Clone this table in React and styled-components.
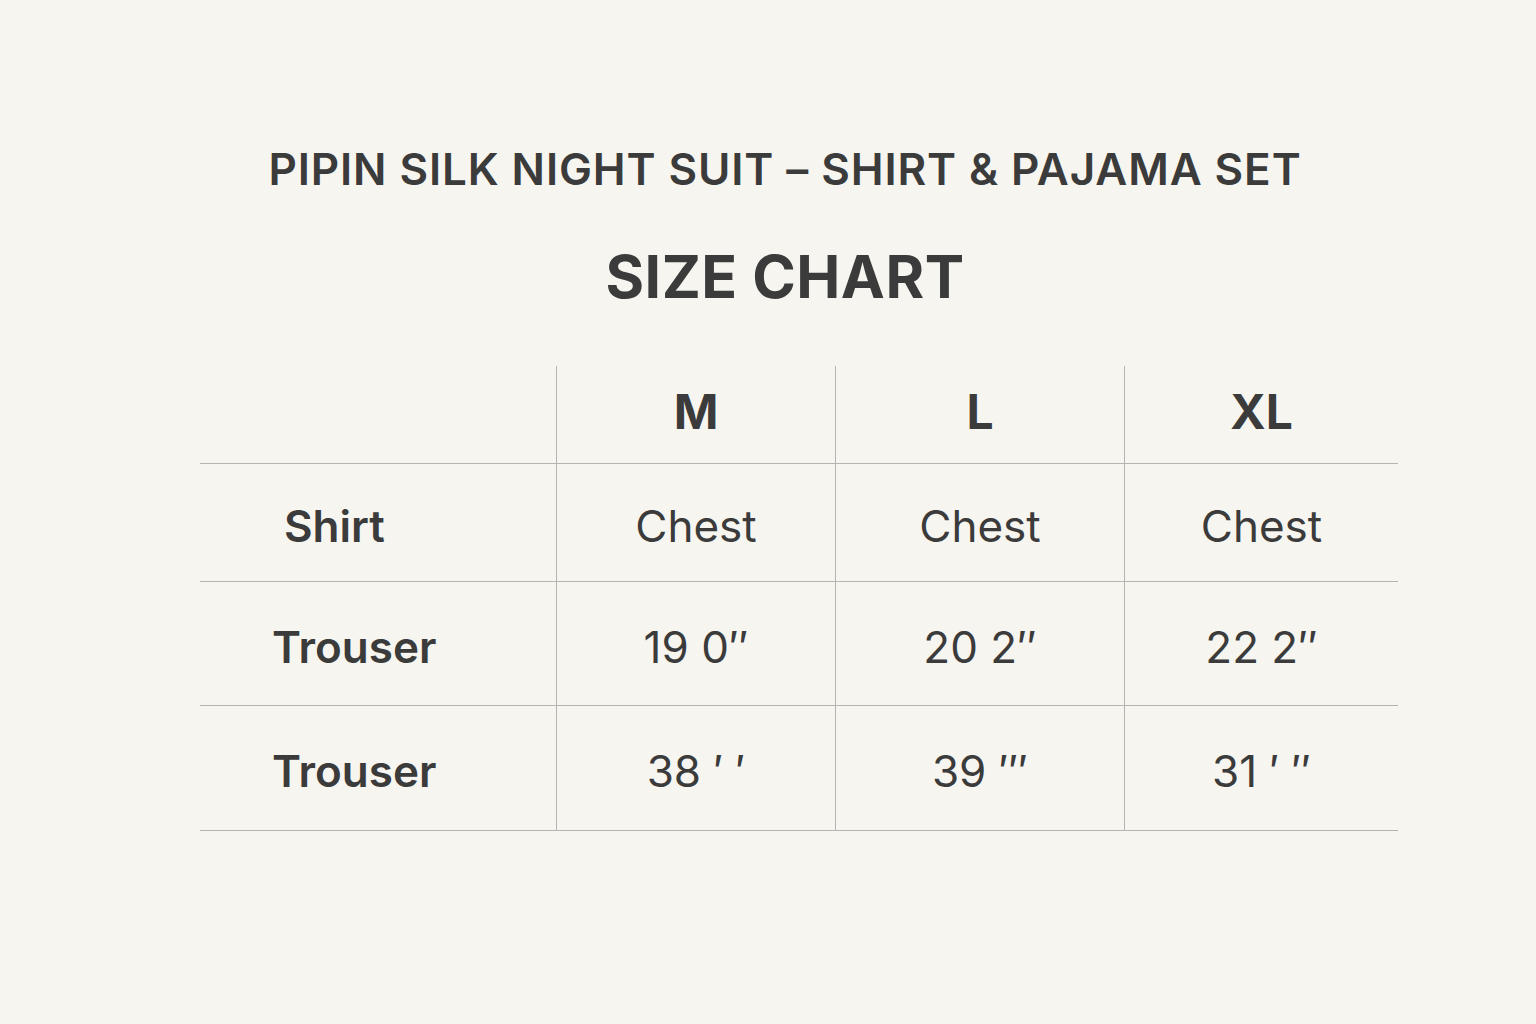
import React from "react";
import styled, { createGlobalStyle } from "styled-components";

const sizes = ["M", "L", "XL"];

const rows = [
  { label: "Shirt", indent: 84, values: ["Chest", "Chest", "Chest"], height: 118 },
  { label: "Trouser", indent: 72, values: ["19 0\u2033", "20 2\u2033", "22 2\u2033"], height: 124 },
  { label: "Trouser", indent: 72, values: ["38 \u2032 \u2032", "39 \u2032\u2033", "31 \u2032 \u2033"], height: 125 },
];

function App() {
  return (
    <>
      <GlobalStyle />
      <Page>
        <Heading>
          <Product>PIPIN SILK NIGHT SUIT – SHIRT &amp; PAJAMA SET</Product>
          <ChartTitle>SIZE CHART</ChartTitle>
        </Heading>

        <Table role="table" aria-label="size chart">
          <HeadCell $first />
          {sizes.map((s) => (
            <HeadCell key={s}>{s}</HeadCell>
          ))}

          {rows.map((row, i) => (
            <React.Fragment key={i}>
              <LabelCell $indent={row.indent} $height={row.height}>
                {row.label}
              </LabelCell>
              {row.values.map((v, j) => (
                <ValueCell key={j} $height={row.height}>
                  {v}
                </ValueCell>
              ))}
            </React.Fragment>
          ))}
        </Table>
      </Page>
    </>
  );
}

/* ----- styles ----- */

const GlobalStyle = createGlobalStyle`
  html, body {
    margin: 0;
    padding: 0;
    background: #f7f5f0;
  }
  body {
    font-family: Inter, "Liberation Sans", sans-serif;
    color: #3b3b3b;
  }
`;

const Page = styled.main`
  width: 1536px;
  height: 1024px;
  box-sizing: border-box;
  padding-top: 141px;
  display: flex;
  flex-direction: column;
`;

const Heading = styled.header`
  display: flex;
  flex-direction: column;
  align-items: center;
  padding-left: 34px;
`;

const Product = styled.h2`
  margin: 0;
  font-size: 44px;
  font-weight: 600;
  line-height: 56px;
  letter-spacing: 0.9px;
`;

const ChartTitle = styled.h1`
  margin: 44px 0 0;
  font-size: 59px;
  font-weight: 700;
  line-height: 72px;
  letter-spacing: 0.5px;
`;

const Table = styled.div`
  margin: 53px 0 0 200px;
  width: 1198px;
  display: grid;
  grid-template-columns: 356px 279px 289px 274px;
`;

const Cell = styled.div`
  display: flex;
  align-items: center;
  box-sizing: border-box;
  border-bottom: 1px solid #b6b4b0;
  font-size: 44px;
`;

const HeadCell = styled(Cell)`
  height: 98px;
  justify-content: center;
  padding-bottom: 6px;
  font-size: 48px;
  font-weight: 700;
  border-left: ${(p) => (p.$first ? "none" : "1px solid #b6b4b0")};
`;

const LabelCell = styled(Cell)`
  height: ${(p) => p.$height}px;
  padding-left: ${(p) => p.$indent}px;
  padding-top: 6px;
  font-weight: 600;
`;

const ValueCell = styled(Cell)`
  height: ${(p) => p.$height}px;
  justify-content: center;
  padding-top: 6px;
  font-weight: 400;
  border-left: 1px solid #b6b4b0;
`;

export default App;
